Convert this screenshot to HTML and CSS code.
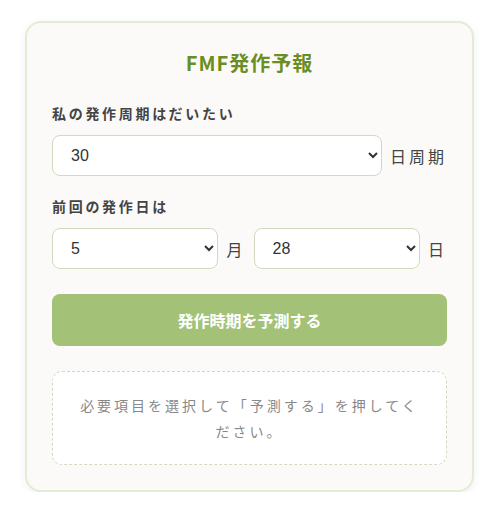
FILE: index.html
```html
<!DOCTYPE html>
<html lang="ja">
<head>
<meta charset="UTF-8">
<meta name="viewport" content="width=device-width, initial-scale=1.0">
<title>FMF発作予報</title>
<link rel="stylesheet" href="styles.css">
</head>
<body>

<div class="card">
  <h1 class="title">FMF発作予報</h1>

  <label class="label" for="cycle">私の発作周期はだいたい</label>
  <div class="row">
    <select id="cycle" class="select">
      <option>30</option>
    </select>
    <span class="unit">日周期</span>
  </div>

  <label class="label" for="month">前回の発作日は</label>
  <div class="row">
    <select id="month" class="select">
      <option>5</option>
    </select>
    <span class="unit">月</span>
    <select id="day" class="select">
      <option>28</option>
    </select>
    <span class="unit">日</span>
  </div>

  <button class="predict">発作時期を予測する</button>

  <div class="result">必要項目を選択して「予測する」を押してください。</div>
</div>

</body>
</html>
```

FILE: styles.css
```css
body {
  margin: 0;
  background: #ffffff;
  font-family: "Noto Sans CJK JP", "Noto Sans", sans-serif;
  color: #444;
}

.card {
  box-sizing: border-box;
  width: 449px;
  margin: 21px 0 0 25px;
  padding: 28px 25px 25px;
  background: #fbfaf8;
  border: 2px solid #e3ecd6;
  border-radius: 16px;
  box-shadow: 0 2px 8px rgba(0, 0, 0, 0.06);
}

.title {
  margin: 0 0 28px;
  text-align: center;
  font-size: 20px;
  line-height: 24px;
  font-weight: bold;
  letter-spacing: 1px;
  color: #6b8e23;
}

.label {
  display: block;
  font-size: 14px;
  line-height: 20px;
  font-weight: bold;
  letter-spacing: 2.7px;
  color: #444;
  margin-bottom: 12px;
}

.row {
  display: flex;
  align-items: center;
  gap: 8px;
  margin-bottom: 20px;
}

.select {
  flex: 1;
  min-width: 0;
  height: 41px;
  padding: 0 10px 0 14px;
  font-family: "Liberation Sans", Arial, sans-serif;
  font-size: 16px;
  color: #333;
  background: #ffffff;
  border: 1px solid #d2d9bf;
  border-radius: 8px;
}

.unit {
  font-size: 16px;
  letter-spacing: 3px;
  color: #444;
}

.predict {
  display: block;
  width: 100%;
  height: 52px;
  margin-top: 25px;
  border: none;
  border-radius: 8px;
  background: #a3c277;
  color: #ffffff;
  font-family: "Noto Sans CJK JP", "Noto Sans", sans-serif;
  font-size: 16px;
  font-weight: bold;
}

.result {
  margin-top: 25px;
  padding: 20px 24px;
  background: #ffffff;
  border: 1px dashed #d2d9bf;
  border-radius: 10px;
  text-align: center;
  font-size: 14px;
  line-height: 26px;
  letter-spacing: 3px;
  color: #888;
}
```
